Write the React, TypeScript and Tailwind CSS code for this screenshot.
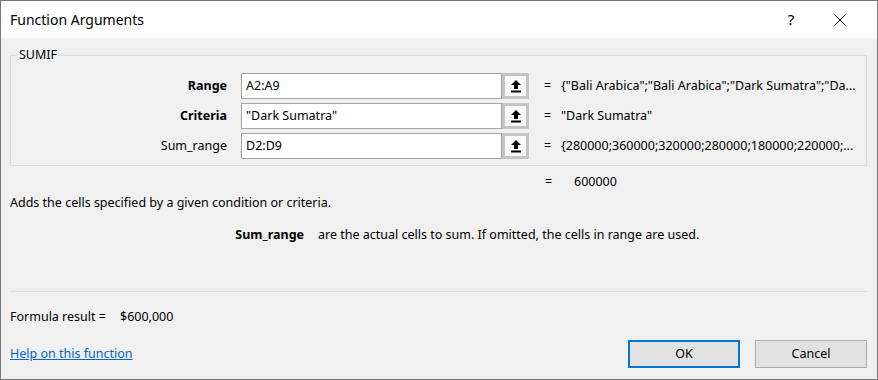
import React from 'react';

const font = { fontFamily: '"Noto Sans", "Open Sans", sans-serif' };

interface Arg {
  name: string;
  bold: boolean;
  input: string;
  value: string;
}

const args: Arg[] = [
  { name: 'Range', bold: true, input: 'A2:A9', value: '{"Bali Arabica";"Bali Arabica";"Dark Sumatra";"Da...' },
  { name: 'Criteria', bold: true, input: '"Dark Sumatra"', value: '"Dark Sumatra"' },
  { name: 'Sum_range', bold: false, input: 'D2:D9', value: '{280000;360000;320000;280000;180000;220000;...' },
];

const CollapseIcon = () => (
  <svg width="12" height="14" viewBox="0 0 12 14">
    <path d="M6 1 L11 6 L8 6 L8 10 L4 10 L4 6 L1 6 Z" fill="#000" />
    <rect x="1" y="11.5" width="10" height="2" fill="#000" />
  </svg>
);

const ArgRow: React.FC<{ arg: Arg }> = ({ arg }) => (
  <div className="flex items-center h-[26px]">
    <div className={`w-[216px] text-right text-[12.5px] text-black ${arg.bold ? 'font-bold' : ''}`}>{arg.name}</div>
    <div className="ml-[14px] w-[261px] h-[26px] bg-white border border-[#a3a3a3] flex items-center px-[4px] text-[12.5px] text-black">
      {arg.input}
    </div>
    <div className="w-[27px] h-[26px] border-[3px] border-[#c4c4c4] bg-[#fafafa] flex items-center justify-center">
      <CollapseIcon />
    </div>
    <div className="ml-[15px] w-[17px] text-[12.5px] text-black">=</div>
    <div className="text-[12.5px] text-black whitespace-nowrap">{arg.value}</div>
  </div>
);

export default function App() {
  return (
    <div style={font} className="w-[878px] h-[380px] border border-[#777777] bg-[#f0f0f0] flex flex-col overflow-hidden">
      {/* title bar */}
      <div className="h-[37px] bg-white flex items-center pl-[9px] shrink-0">
        <div className="text-[14px] text-black flex-1">Function Arguments</div>
        <div className="w-[40px] text-center text-[15px] text-black">?</div>
        <div className="w-[58px] flex justify-center mr-[8px]">
          <svg width="12" height="12" viewBox="0 0 12 12">
            <path d="M0.5 0.5 L11.5 11.5 M11.5 0.5 L0.5 11.5" stroke="#000" strokeWidth="1" />
          </svg>
        </div>
      </div>

      <div className="flex flex-col pl-[9px] pr-[10px] flex-1">
        {/* group box */}
        <div className="relative mt-[17px] h-[111px] border border-[#dcdcdc] pt-[17px] flex flex-col gap-[4px]">
          <span className="absolute left-[6px] top-[-9px] px-[2px] bg-[#f0f0f0] text-[12.5px] leading-[16px] text-black">SUMIF</span>
          {args.map(a => (
            <ArgRow key={a.name} arg={a} />
          ))}
        </div>

        <div className="mt-[8px] h-[16px] leading-[16px] flex text-[12.5px] text-black">
          <div className="w-[535px]" />
          <div className="w-[29px]">=</div>
          <div>600000</div>
        </div>

        <div className="mt-[5px] h-[16px] leading-[16px] text-[12.5px] text-black">
          Adds the cells specified by a given condition or criteria.
        </div>

        <div className="mt-[16px] h-[16px] leading-[16px] flex text-[12.5px] text-black">
          <div className="w-[294px] text-right font-bold">Sum_range</div>
          <div className="ml-[14px]">are the actual cells to sum. If omitted, the cells in range are used.</div>
        </div>

        <div className="mt-[48px] h-px bg-[#dcdcdc]" />

        <div className="mt-[17px] h-[16px] leading-[16px] flex text-[12.5px] text-black">
          <div className="w-[110px]">Formula result =</div>
          <div>$600,000</div>
        </div>

        <div className="mt-[15px] h-[28px] flex items-center">
          <a href="#" className="text-[12.5px] text-[#0066cc] underline flex-1">Help on this function</a>
          <button className="w-[112px] h-[28px] border-2 border-[#0078d7] bg-[#e1e1e1] text-[12.5px] text-black">OK</button>
          <button className="ml-[15px] w-[112px] h-[28px] border border-[#adadad] bg-[#e1e1e1] text-[12.5px] text-black">Cancel</button>
        </div>
      </div>
    </div>
  );
}
